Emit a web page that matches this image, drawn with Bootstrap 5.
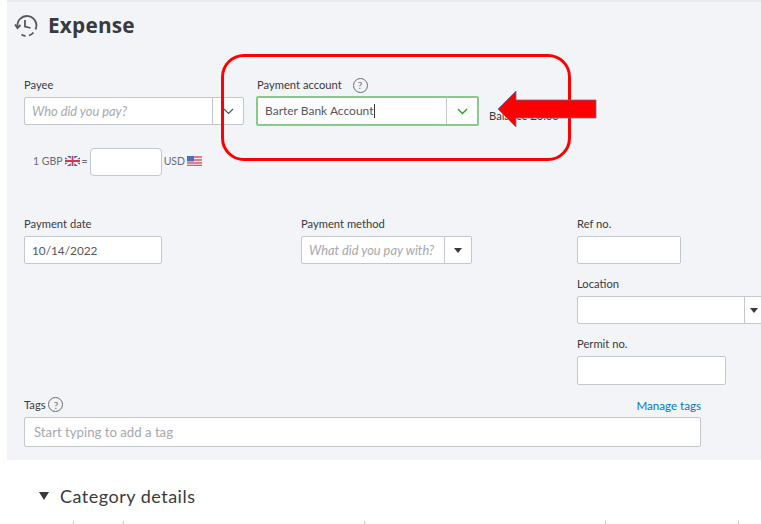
<!DOCTYPE html>
<html lang="en"><head><meta charset="utf-8"><title>Expense</title>
<link rel="stylesheet" href="https://cdn.jsdelivr.net/npm/bootstrap@5.3.0/dist/css/bootstrap.min.css">
<style>
html,body{height:100%;overflow:hidden;background:#fff}
body{font-family:"Lato","Open Sans",sans-serif;color:#393a3d;font-size:11.2px;width:761px;height:524px;position:relative}
.sheet{margin-left:7px;border-top:2px solid #e9eaec;background:#f3f4f8;height:460px;padding:0 0 0 17px;width:754px}
.headline{height:47px;margin-left:-10px;padding-bottom:1px}
.headline h1{font-size:20.8px;font-weight:700;margin:0 0 0 9px;color:#393a3d;letter-spacing:.2px;font-family:"Open Sans",sans-serif}
.fld-label{display:block;font-size:11.2px;line-height:16px;height:16px;margin:0 0 4px;color:#393a3d;white-space:nowrap}
.combo{display:flex;background:#fff;border:1px solid #c4c7cc;border-radius:2px;height:28px;font-size:12px;overflow:hidden}
.combo .form-control{border:0;border-radius:0;height:100%;min-height:0;background:transparent;padding:0 7px;font-size:12.8px;color:#55565b;box-shadow:none}
.combo .form-control::placeholder{color:#a6a8ad;font-style:italic;opacity:1}
.caret-btn{border-left:1px solid #c4c7cc;flex:none;display:flex;align-items:center;justify-content:center;height:100%}
.tri{width:0;height:0;border-left:4px solid transparent;border-right:4px solid transparent;border-top:5px solid #393a3d}
.row-top{height:122px;padding-top:28px}
.w-payee{width:220px}.w-payacc{width:223px;height:30px;border:2px solid #8ac88c;margin-left:12px}
.acc-col{margin-top:-1px}
.bal{font-size:11.2px;margin:31px 0 0 10px;white-space:nowrap}
.fx{height:28px;padding-left:9px;font-size:10.5px;color:#6b6c72;margin-top:-23px;gap:2px}
.fx svg{flex:none;margin-bottom:3px}
.fx .form-control{height:28px;min-height:0;border-color:#c4c7cc;padding:0 6px}
.w-fx{width:72px}
.grid3{margin-top:40px;display:flex}
.col-a,.col-b,.col-c{flex:none}
.col-a{width:277px}.col-b{width:276px}.col-c{width:190px}
.w-date{width:138px}.w-date .form-control{font-size:11.8px}.w-method{width:171px}.w-ref{width:104px}.w-loc{width:200px}.w-permit{width:149px;height:29px}
.gap16{margin-top:12px}
.tags-wrap{position:absolute;left:24px;top:396px;width:677px}
.tags-wrap .combo{height:30px}
.tags-wrap .form-control{padding-left:9px;font-size:13.2px}
.tags-wrap .form-control::placeholder{font-style:normal}
.manage{font-size:11.6px;color:#0077c5;text-decoration:none;padding-top:3px}
.qmark{display:inline-flex;width:15px;height:15px;border:1.3px solid #6b6c72;border-radius:50%;align-items:center;justify-content:center;font-size:10px;color:#6b6c72;line-height:1}
.cat{margin:26px 0 0 39px;font-size:18px;line-height:20px;color:#393a3d;gap:11px;letter-spacing:.5px}
.cat .tri{border-left-width:5px;border-right-width:5px;border-top:8px solid #393a3d}
.ticks{position:absolute;left:0;right:0;top:521px;height:3px}
.ticks i{position:absolute;top:0;width:1px;height:3px;background:#c4c7cc}
.ring{position:absolute;left:221px;top:54px;width:350px;height:107px;border:3px solid #f00;border-radius:23px;pointer-events:none}
.red-arrow{position:absolute;left:497px;top:90px}
.cursor{display:inline-block;width:1px;height:14px;background:#393a3d;vertical-align:-3px}
.acc-val{padding:0 7px;line-height:26px;font-size:12px;flex:1;white-space:nowrap;color:#55565b}
</style></head>
<body>
<div class="sheet">
  <div class="headline d-flex align-items-center">
    <svg width="25" height="25" viewBox="0 0 25 25" fill="none" stroke="#55565b" stroke-width="1.8"><path d="M3.500 14A9.500 9.500 0 1 1 21.500 16.500"/><path d="M19.500 19.500a9.500 9.500 0 0 1-4.500 3M11.500 23a9.500 9.500 0 0 1-4-1.500" /><path d="M1 11.500l2.500 3.500 3-3"/><path d="M11 7v6.500l5.500 1.500"/></svg>
    <h1>Expense</h1>
  </div>
  <div class="row-top d-flex flex-wrap align-content-start">
    <div>
      <label class="fld-label" for="payee">Payee</label>
      <div class="combo w-payee"><input id="payee" class="form-control" placeholder="Who did you pay?"><span class="caret-btn" style="width:31px"><svg width="11" height="7" viewBox="0 0 11 7" fill="none" stroke="#55565b" stroke-width="1.2"><path d="M1 1l4.500 4.500L10 1"/></svg></span></div>
    </div>
    <div class="acc-col">
      <label class="fld-label" style="margin-left:13px;margin-bottom:4px;padding-top:1px">Payment account <span class="qmark ms-2">?</span></label>
      <div class="combo w-payacc"><span class="acc-val">Barter Bank Account<span class="cursor"></span></span><span class="caret-btn" style="width:31px"><svg width="11" height="7" viewBox="0 0 11 7" fill="none" stroke="#2ca01c" stroke-width="1.4"><path d="M1 1l4.500 4.500L10 1"/></svg></span></div>
    </div>
    <div class="bal">Balance £0.00</div>
  </div>
  <div class="fx d-flex align-items-center">
    <span>1 GBP</span>
    <svg width="15" height="10" viewBox="0 0 15 10"><rect width="15" height="10" fill="#3a5ba8"/><path d="M0 0l15 10M15 0L0 10" stroke="#fff" stroke-width="2"/><path d="M7.500 0v10M0 5h15" stroke="#fff" stroke-width="3.500"/><path d="M7.500 0v10M0 5h15" stroke="#d8344a" stroke-width="1.800"/></svg>
    <span>=</span>
    <input class="form-control w-fx rounded-1" aria-label="Exchange rate">
    <span>USD</span>
    <svg width="15" height="10" viewBox="0 0 15 10"><rect width="15" height="10" fill="#f2f2f4"/><path d="M0 1h15M0 4h15M0 7h15M0 9.300h15" stroke="#e2576a" stroke-width="1.300"/><rect width="7" height="5.500" fill="#4a6fc0"/></svg>
  </div>
  <div class="grid3">
    <div class="col-a">
      <label class="fld-label">Payment date</label>
      <div class="combo w-date"><input class="form-control" value="10/14/2022"></div>
    </div>
    <div class="col-b">
      <label class="fld-label">Payment method</label>
      <div class="combo w-method"><input class="form-control" placeholder="What did you pay with?"><span class="caret-btn" style="width:27px"><span class="tri"></span></span></div>
    </div>
    <div class="col-c">
      <label class="fld-label">Ref no.</label>
      <div class="combo w-ref"></div>
      <label class="fld-label gap16">Location</label>
      <div class="combo w-loc"><span class="flex-grow-1"></span><span class="caret-btn" style="width:32px;justify-content:flex-start;padding-left:5px"><span class="tri"></span></span></div>
      <label class="fld-label gap16">Permit no.</label>
      <div class="combo w-permit"></div>
    </div>
  </div>
</div>
<div class="tags-wrap">
  <div class="d-flex justify-content-between align-items-center" style="height:17px;margin-bottom:4px"><span class="fld-label m-0">Tags <span class="qmark">?</span></span><a class="manage" href="#">Manage tags</a></div>
  <div class="combo"><input class="form-control" placeholder="Start typing to add a tag"></div>
</div>
<div class="cat d-flex align-items-center"><span class="tri"></span><span>Category details</span></div>
<div class="ticks"><i style="left:73px"></i><i style="left:123px"></i><i style="left:364px"></i><i style="left:605px"></i><i style="left:738px"></i></div>
<div class="ring"></div>
<svg class="red-arrow" width="101" height="38" viewBox="0 0 101 38"><path d="M1 19L19 1v9h80v18H19v9z" fill="#f00" stroke="#5a6f9a" stroke-width=".8"/></svg>
</body></html>
